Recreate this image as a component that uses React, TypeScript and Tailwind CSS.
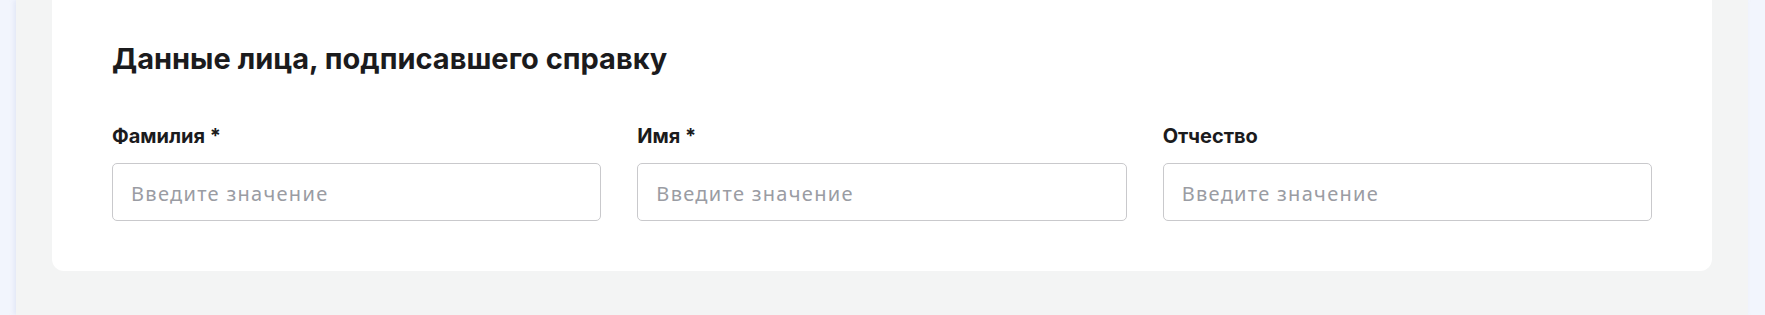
export default function App() {
  const fields = [
    { label: "Фамилия *" },
    { label: "Имя *" },
    { label: "Отчество" },
  ];
  return (
    <div className="min-h-[315px] w-full bg-[#f2f5fd]" style={{ fontFamily: "Inter, Roboto, 'Liberation Sans', sans-serif" }}>
      <div className="ml-[16px] mr-[17px] min-h-[315px] bg-[#f3f4f4] shadow-[-2px_0_4px_rgba(200,210,235,0.35)]">
        <div className="mx-[36px] rounded-b-[12px] bg-white px-[60px] pt-[42px] pb-[50px]">
          <h2 className="text-[29px] leading-[34px] font-bold text-[#1b1b1d]">Данные лица, подписавшего справку</h2>
          <div className="mt-[48px] grid grid-cols-3 gap-[36px]">
            {fields.map((f) => (
              <div key={f.label} className="flex flex-col">
                <label className="text-[20px] leading-[24px] font-bold text-[#1b1b1d]">{f.label}</label>
                <input
                  className="mt-[15px] h-[58px] w-full rounded-[5px] border border-[#c9c9cc] bg-white px-[18px] pt-[3px] text-[20px] tracking-[1.3px] text-[#1b1b1d] placeholder:text-[#9a9ca3] outline-none"
                  style={{ fontFamily: "'Noto Sans', 'Open Sans', sans-serif" }}
                  placeholder="Введите значение"
                />
              </div>
            ))}
          </div>
        </div>
      </div>
    </div>
  );
}
